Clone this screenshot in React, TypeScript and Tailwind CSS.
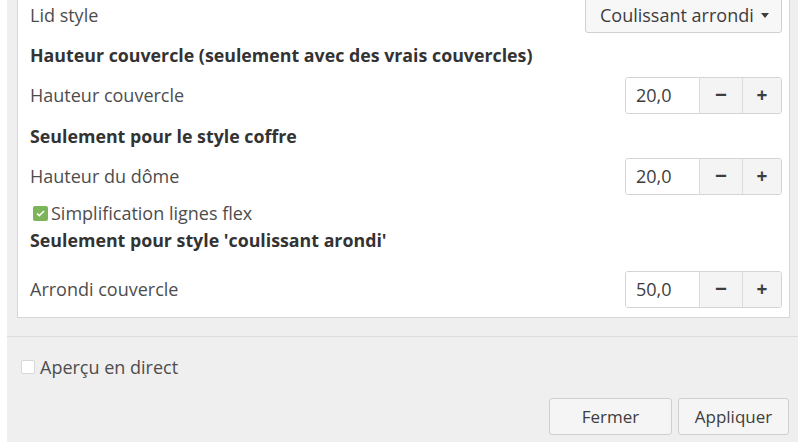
import React from 'react';

const font = { fontFamily: '"Open Sans", "Noto Sans", sans-serif' };

interface SpinProps {
  value: string;
}

const SpinBox: React.FC<SpinProps> = ({ value }) => (
  <div className="flex h-[37px] w-[157px] rounded-[3px] border border-[#d4d4d4] overflow-hidden">
    <div className="flex w-[73px] items-center bg-white pl-[10px] text-[18px] text-[#3d3d3d]">{value}</div>
    <button className="flex w-[43px] items-center justify-center border-l border-[#dcdcdc] bg-[#f4f4f4] text-[21px] font-bold text-[#3d3d3d]">
      −
    </button>
    <button className="flex flex-1 items-center justify-center border-l border-[#dcdcdc] bg-[#f4f4f4] text-[19px] font-bold text-[#3d3d3d]">
      +
    </button>
  </div>
);

const Heading: React.FC<{ children: React.ReactNode; className: string }> = ({ children, className }) => (
  <div className={`flex items-center text-[17.8px] font-bold text-[#333333] ${className}`}>{children}</div>
);

const SpinRow: React.FC<{ label: string; value: string; className: string }> = ({ label, value, className }) => (
  <div className={`flex items-center justify-between ${className}`}>
    <span className="text-[18px] text-[#4d4d4d]">{label}</span>
    <SpinBox value={value} />
  </div>
);

export default function App() {
  return (
    <div className="h-[443px] w-[798px] overflow-hidden bg-white" style={font}>
      <div className="ml-[7px] flex h-[442px] flex-col overflow-hidden bg-[#efefef]">
        {/* settings frame */}
        <div className="-mt-[6px] ml-[10px] mr-[8px] border border-[#d6d6d6] bg-white pb-[8px] pl-[12px] pr-[7px]">
          <div className="flex h-[40px] items-center justify-between">
            <span className="text-[18px] text-[#4d4d4d]">Lid style</span>
            <div className="flex h-[36px] w-[197px] items-center gap-[7px] rounded-[3px] border border-[#d0d0d0] bg-[#f7f7f7] pl-[14px] text-[18px] text-[#3d3d3d]">
              Coulissant arrondi
              <svg width="8" height="5" viewBox="0 0 8 5">
                <path d="M0 0h8L4 5z" fill="#3d3d3d" />
              </svg>
            </div>
          </div>
          <Heading className="h-[40px]">Hauteur couvercle (seulement avec des vrais couvercles)</Heading>
          <SpinRow label="Hauteur couvercle" value="20,0" className="h-[40px]" />
          <Heading className="h-[42px]">Seulement pour le style coffre</Heading>
          <SpinRow label="Hauteur du dôme" value="20,0" className="h-[38px]" />
          <div className="flex h-[36px] items-center gap-[3px] pl-[3px]">
            <span className="flex h-[15px] w-[15px] items-center justify-center rounded-[2px] bg-[#7db45a]">
              <svg width="9" height="7" viewBox="0 0 9 7">
                <path d="M1 3.5l2.3 2.2L8 1" stroke="#fff" strokeWidth="1.6" fill="none" />
              </svg>
            </span>
            <span className="text-[18px] text-[#4d4d4d]">Simplification lignes flex</span>
          </div>
          <Heading className="h-[18px]">Seulement pour style 'coulissant arondi'</Heading>
          <SpinRow label="Arrondi couvercle" value="50,0" className="mt-[20px] h-[40px]" />
        </div>

        <div className="mt-[18px] h-px bg-[#dcdcdc]" />

        <div className="mt-[21px] flex h-[18px] items-center gap-[5px] pl-[14px]">
          <span className="h-[14px] w-[14px] rounded-[2px] border border-[#d8d8d8] bg-white" />
          <span className="text-[18px] text-[#4d4d4d]">Aperçu en direct</span>
        </div>

        <div className="mt-[22px] flex justify-end gap-[6px] pr-[9px]">
          <button className="h-[37px] w-[123px] rounded-[3px] border border-[#cfcfcf] bg-[#f5f5f5] text-[17px] text-[#3d3d3d]">
            Fermer
          </button>
          <button className="h-[37px] w-[111px] rounded-[3px] border border-[#cfcfcf] bg-[#f5f5f5] text-[17px] text-[#3d3d3d]">
            Appliquer
          </button>
        </div>
      </div>
    </div>
  );
}
